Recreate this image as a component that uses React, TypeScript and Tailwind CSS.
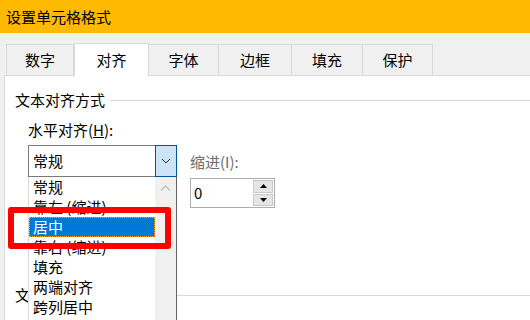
const tabs = ["数字", "对齐", "字体", "边框", "填充", "保护"];
const tabWidths = [68, 75, 70, 73, 71, 70];
const items = ["常规", "靠左 (缩进)", "居中", "靠右 (缩进)", "填充", "两端对齐", "跨列居中"];

export default function App() {
  return (
    <div
      className="w-[530px] h-[320px] overflow-hidden bg-[#f0f0f0] flex flex-col text-[15px] leading-[20px] text-black relative"
      style={{ fontFamily: '"Noto Sans CJK SC", "Noto Sans", sans-serif' }}
    >
      <div className="h-[33px] bg-[#ffb900] flex items-center pl-[6px] text-[15px] shrink-0">
        设置单元格格式
      </div>

      <div className="flex items-end h-[42px] pl-[6px] shrink-0">
        {tabs.map((t, i) =>
          i === 1 ? (
            <div
              key={t}
              className="h-[33px] -mb-px bg-white border border-b-0 border-[#d9d9d9] flex items-center justify-center relative z-10"
              style={{ width: tabWidths[i] }}
            >
              {t}
            </div>
          ) : (
            <div
              key={t}
              className="h-[31px] border border-b-0 border-l-0 first:border-l border-[#d9d9d9] flex items-center justify-center"
              style={{ width: tabWidths[i] }}
            >
              {t}
            </div>
          )
        )}
      </div>

      <div className="flex-1 ml-[4px] bg-white border-l border-t border-[#d9d9d9] flex flex-col">
        <div className="mt-[14px] pl-[10px] flex items-center h-[20px]">
          <span>文本对齐方式</span>
          <div className="flex-1 h-px bg-[#dcdcdc] ml-[5px]" />
        </div>

        <div className="mt-[10px] pl-[23px] h-[20px]">
          水平对齐(<span className="underline">H</span>):
        </div>

        <div className="mt-[5px] pl-[23px] flex items-start">
          <div className="relative w-[149px] h-[32px] border border-[#7a7a7a] flex">
            <div className="flex-1 flex items-center pl-[4px]">常规</div>
            <div className="w-[22px] -my-px -mr-px bg-[#cce4f7] border border-[#005499] flex items-center justify-center">
              <svg width="10" height="6" viewBox="0 0 10 6">
                <path d="M1 1 L5 5 L9 1" fill="none" stroke="#333" strokeWidth="1" />
              </svg>
            </div>

            <div className="absolute left-[-1px] top-[31px] w-[149px] h-[160px] bg-white border-l border-l-[#d9d9d9] border-r border-r-[#646464] flex z-20">
              <div className="flex-1 flex flex-col">
                {items.map((it, i) => (
                  <div
                    key={it}
                    className={
                      i === 2
                        ? "h-[20px] flex items-center pl-[3px] bg-[#0078d7] text-white border border-dotted border-[#f5a623]"
                        : "h-[20px] flex items-center pl-[4px]"
                    }
                  >
                    {it}
                  </div>
                ))}
              </div>
              <div className="w-[21px] bg-[#f0f0f0] flex justify-center pt-[8px]">
                <svg width="11" height="6" viewBox="0 0 11 6">
                  <path d="M1 5.5 L5.5 1 L10 5.5" fill="none" stroke="#c2c2c2" strokeWidth="1.5" />
                </svg>
              </div>
            </div>
          </div>

          <div className="ml-[13px] pt-[7px] flex flex-col">
            <div className="h-[20px] text-[#6d6d6d]">缩进(I):</div>
            <div className="mt-[6px] w-[85px] h-[30px] border border-[#adadad] flex items-center">
              <div className="flex-1 pl-[3px]">0</div>
              <div className="w-[20px] h-[26px] mr-[1px] flex flex-col gap-px">
                <div className="flex-1 bg-[#e5e5e5] border border-[#c8c8c8] flex items-center justify-center">
                  <svg width="7" height="4" viewBox="0 0 7 4">
                    <path d="M0 4 L3.5 0 L7 4 Z" fill="#000" />
                  </svg>
                </div>
                <div className="flex-1 bg-[#e5e5e5] border border-[#c8c8c8] flex items-center justify-center">
                  <svg width="7" height="4" viewBox="0 0 7 4">
                    <path d="M0 0 L3.5 4 L7 0 Z" fill="#000" />
                  </svg>
                </div>
              </div>
            </div>
          </div>
        </div>

        <div className="mt-[77px] pl-[10px] flex items-center h-[20px]">
          <span>文</span>
          <div className="flex-1 h-px bg-[#dcdcdc] ml-[5px]" />
        </div>
      </div>

      <div className="absolute left-[8px] top-[207px] w-[163px] h-[42px] border-[6px] border-[#ff0000] rounded-[3px] z-30" />
    </div>
  );
}
